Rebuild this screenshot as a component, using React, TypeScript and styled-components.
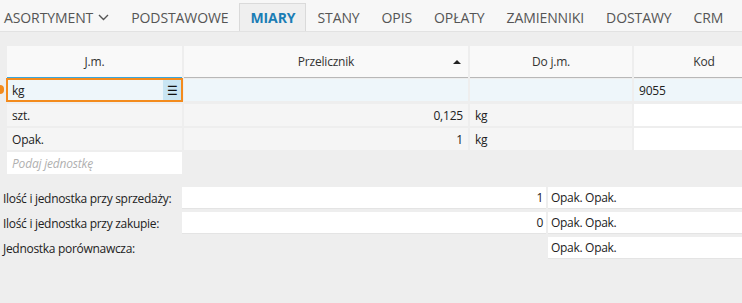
import React from "react";
import styled, { createGlobalStyle } from "styled-components";

const Global = createGlobalStyle`
  html, body { margin: 0; padding: 0; }
  body {
    background: #eeeeee;
    font-family: "Open Sans", "Noto Sans", sans-serif;
    color: #222;
    overflow: hidden;
    width: 742px;
    height: 303px;
  }
`;

const TabBar = styled.div`
  display: flex;
  align-items: flex-end;
  height: 32px;
  background: #f7f7f7;
  border-bottom: 1px solid #e2e2e2;
  box-sizing: border-box;
  padding-left: 3px;
  white-space: nowrap;
`;

const Tab = styled.div<{ $active?: boolean }>`
  display: flex;
  align-items: center;
  gap: 5px;
  height: 28px;
  padding: 0 10px;
  font-size: 14px;
  letter-spacing: -0.1px;
  color: ${(p) => (p.$active ? "#1b7db5" : "#555")};
  font-weight: ${(p) => (p.$active ? 700 : 400)};
  background: ${(p) => (p.$active ? "#efefef" : "transparent")};
  border: 1px solid ${(p) => (p.$active ? "#dadada" : "transparent")};
  border-bottom: none;
  box-sizing: border-box;
  &:first-child { padding-left: 0; margin-right: 0; }
`;

const Content = styled.div`
  padding: 14px 0 0 0;
`;

const Grid = styled.div`
  display: grid;
  grid-template-columns: 175px 284px 162px 140px;
  column-gap: 2px;
  margin-left: 7px;
  font-size: 12px;
  letter-spacing: -0.2px;
`;

const HeadCell = styled.div<{ $focus?: boolean }>`
  position: relative;
  height: 32px;
  background: #f9f9f9;
  display: flex;
  align-items: center;
  justify-content: center;
  font-size: 12px;
  color: #333;
  box-sizing: border-box;
  border-bottom: 1px solid ${(p) => (p.$focus ? "#3aa6dc" : "#b8b8b8")};
`;

const SortArrow = styled.span`
  position: absolute;
  right: 7px;
  top: 14px;
  width: 0;
  height: 0;
  border-left: 4px solid transparent;
  border-right: 4px solid transparent;
  border-bottom: 4px solid #222;
`;

const Cell = styled.div<{
  $bg?: string;
  $align?: "left" | "right";
  $placeholder?: boolean;
}>`
  position: relative;
  height: 22px;
  margin-top: 2px;
  background: ${(p) => p.$bg || "#f5f5f5"};
  display: flex;
  align-items: center;
  justify-content: ${(p) => (p.$align === "right" ? "flex-end" : "flex-start")};
  padding: 0 5px;
  box-sizing: border-box;
  white-space: nowrap;
  color: ${(p) => (p.$placeholder ? "#b0b0b0" : "#222")};
  font-style: ${(p) => (p.$placeholder ? "italic" : "normal")};
`;

const FirstRowCell = styled(Cell)`
  margin-top: 1px;
  height: 22px;
`;

const EditCell = styled.div`
  position: relative;
  margin: 0 -1px 0 -1px;
  height: 24px;
  border: 2px solid #f38b1d;
  box-sizing: border-box;
  background: #eef6fa;
  display: flex;
  align-items: center;
  padding-left: 4px;
  font-size: 12px;
  &::after {
    content: "";
    position: absolute;
    left: -8px;
    top: 5px;
    width: 4px;
    height: 9px;
    border-radius: 0 5px 5px 0;
    background: #f38b1d;
  }
`;

const EditText = styled.span`
  flex: 1;
`;

const MenuButton = styled.span`
  width: 18px;
  align-self: stretch;
  background: #c9e5f3;
  display: flex;
  align-items: center;
  justify-content: center;
  font-size: 12px;
  color: #111;
`;

const Empty = styled.div`
  height: 22px;
  margin-top: 2px;
`;

const Form = styled.div`
  margin-top: 13px;
  display: grid;
  grid-template-columns: 177px 364px 197px;
  column-gap: 2px;
  row-gap: 3px;
  padding-left: 3px;
  font-size: 12px;
  letter-spacing: -0.3px;
`;

const Label = styled.div`
  height: 22px;
  display: flex;
  align-items: center;
  white-space: nowrap;
  color: #222;
`;

const Field = styled.div<{ $align?: "left" | "right"; $blank?: boolean }>`
  height: 22px;
  background: ${(p) => (p.$blank ? "transparent" : "#fff")};
  display: flex;
  align-items: center;
  justify-content: ${(p) => (p.$align === "right" ? "flex-end" : "flex-start")};
  padding: 0 3px;
  box-sizing: border-box;
  white-space: nowrap;
  color: #222;
  border-bottom: ${(p) => (p.$blank ? "none" : "1px solid #e4e4e4")};
`;

const Chevron = () => (
  <svg width="11" height="7" viewBox="0 0 11 7" fill="none">
    <path d="M1 1l4.5 4.5L10 1" stroke="#555" strokeWidth="1.4" />
  </svg>
);

export default function App() {
  const tabs = ["PODSTAWOWE", "MIARY", "STANY", "OPIS", "OPŁATY", "ZAMIENNIKI", "DOSTAWY", "CRM"];
  return (
    <>
      <Global />
      <TabBar>
        <Tab>
          ASORTYMENT <Chevron />
        </Tab>
        {tabs.map((t) => (
          <Tab key={t} $active={t === "MIARY"}>
            {t}
          </Tab>
        ))}
      </TabBar>
      <Content>
        <Grid>
          <HeadCell $focus>J.m.</HeadCell>
          <HeadCell>
            Przelicznik
            <SortArrow />
          </HeadCell>
          <HeadCell>Do j.m.</HeadCell>
          <HeadCell>Kod</HeadCell>

          <EditCell>
            <EditText>kg</EditText>
            <MenuButton>☰</MenuButton>
          </EditCell>
          <FirstRowCell $bg="#eef6fa" />
          <FirstRowCell $bg="#eef6fa" />
          <FirstRowCell $bg="#eef6fa">9055</FirstRowCell>

          <Cell>szt.</Cell>
          <Cell $align="right">0,125</Cell>
          <Cell>kg</Cell>
          <Cell $bg="#fff" />

          <Cell>Opak.</Cell>
          <Cell $align="right">1</Cell>
          <Cell>kg</Cell>
          <Cell $bg="#fff" />

          <Cell $bg="#fff" $placeholder>
            Podaj jednostkę
          </Cell>
          <Empty />
          <Empty />
          <Empty />
        </Grid>

        <Form>
          <Label>Ilość i jednostka przy sprzedaży:</Label>
          <Field $align="right">1</Field>
          <Field>Opak. Opak.</Field>

          <Label>Ilość i jednostka przy zakupie:</Label>
          <Field $align="right">0</Field>
          <Field>Opak. Opak.</Field>

          <Label>Jednostka porównawcza:</Label>
          <Field $blank />
          <Field>Opak. Opak.</Field>
        </Form>
      </Content>
    </>
  );
}
